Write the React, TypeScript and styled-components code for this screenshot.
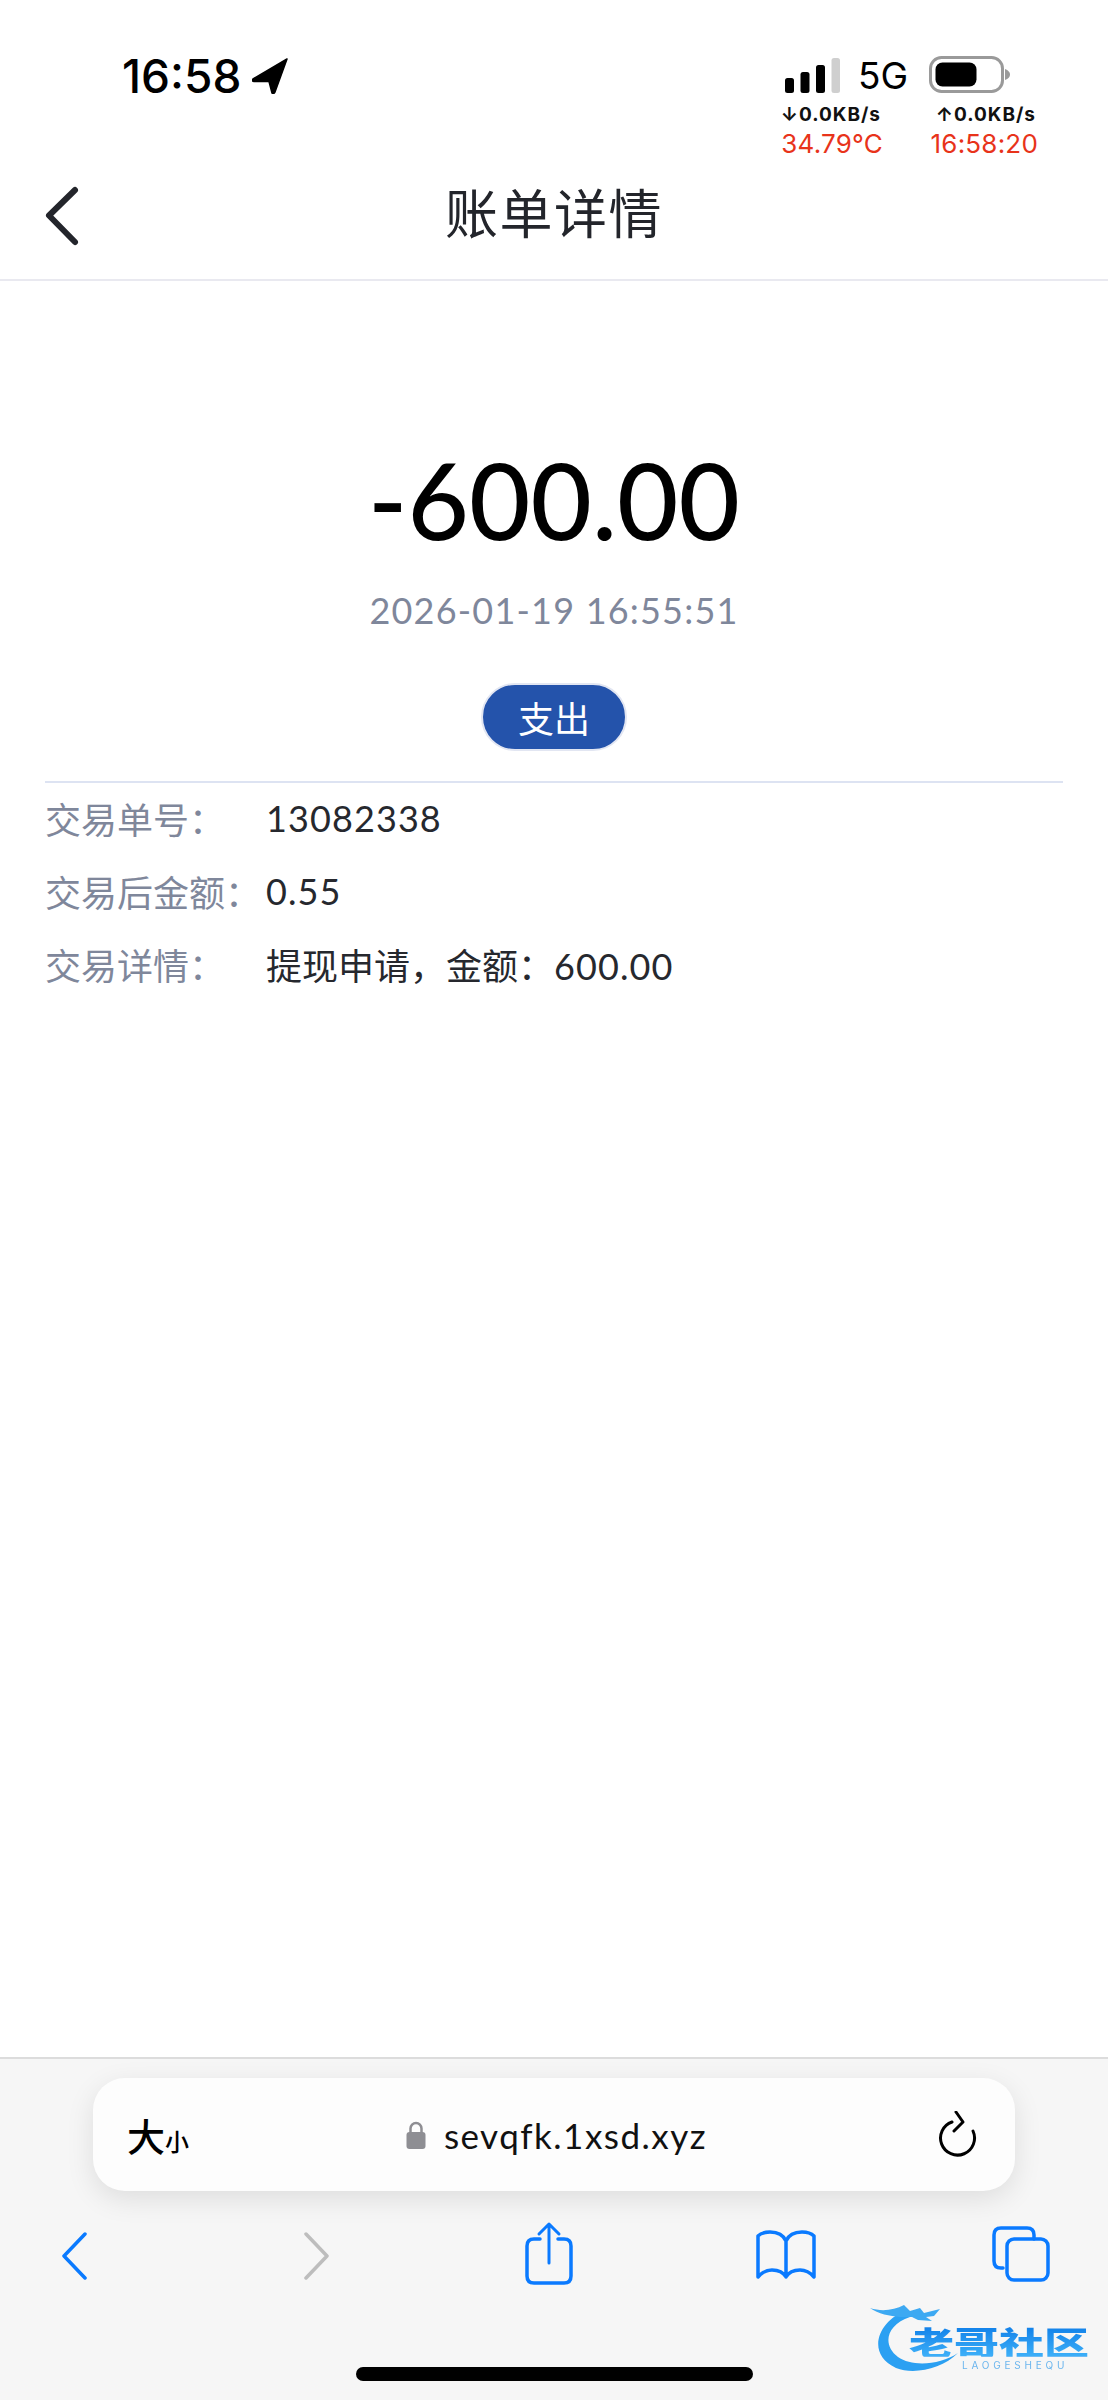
import React from "react";
import styled, { createGlobalStyle } from "styled-components";

const Global = createGlobalStyle`
  html, body { margin: 0; padding: 0; background: #fff; }
  body { font-family: Lato, "Noto Sans CJK SC", sans-serif; }
`;

const Phone = styled.div`
  position: relative;
  width: 1108px;
  height: 2400px;
  display: flex;
  flex-direction: column;
  background: #fff;
  overflow: hidden;
`;

const StatusBar = styled.div`
  height: 165px;
  display: flex;
  justify-content: space-between;
  align-items: flex-start;
  padding: 0 70px 0 122px;
  box-sizing: border-box;
`;

const TimeGroup = styled.div`
  display: flex;
  align-items: center;
  gap: 11px;
  margin-top: 52px;
  height: 48px;
`;

const Clock = styled.span`
  font-family: Inter, sans-serif;
  font-size: 46px;
  font-weight: 500;
  color: #000;
`;

const StatusRight = styled.div`
  display: flex;
  flex-direction: column;
  align-items: flex-end;
  margin-top: 56px;
`;

const SignalRow = styled.div`
  display: flex;
  align-items: center;
  height: 38px;
  width: 249px;
  margin-right: 4px;
`;

const NetLabel = styled.span`
  font-family: Inter, sans-serif;
  font-size: 37px;
  font-weight: 400;
  color: #000;
  margin: 0 21px 0 18px;
`;

const MetricGrid = styled.div`
  display: grid;
  grid-template-columns: 155px 155px;
  margin-top: 9px;
  justify-items: end;
`;

const Speed = styled.span`
  font-family: Inter, sans-serif;
  font-size: 19px;
  font-weight: 700;
  letter-spacing: 1px;
  line-height: 24px;
  color: #111;
  margin-right: 2px;
`;

const Reading = styled.span`
  font-family: Inter, sans-serif;
  font-size: 26px;
  font-weight: 400;
  letter-spacing: 0.2px;
  line-height: 30px;
  color: #e8331a;
  margin-top: 2px;
`;

const NavBar = styled.header`
  height: 116px;
  display: flex;
  align-items: center;
  justify-content: center;
  position: relative;
  border-bottom: 2px solid #e9e9f0;
  box-sizing: border-box;
  padding-bottom: 16px;
`;

const BackButton = styled.div`
  position: absolute;
  left: 43px;
  top: 19px;
  display: flex;
`;

const Title = styled.h1`
  margin: 0;
  font-size: 53px;
  font-weight: 400;
  color: #23252b;
  letter-spacing: 1.500px;
  line-height: 70px;
`;

const Main = styled.main`
  flex: 1;
  display: flex;
  flex-direction: column;
  align-items: center;
  padding: 0 45px;
`;

const Amount = styled.div`
  margin-top: 163px;
  font-size: 106px;
  font-weight: 500;
  line-height: 110px;
  color: #000;
`;

const DateText = styled.div`
  margin-top: 34px;
  font-size: 36px;
  line-height: 44px;
  letter-spacing: 1.200px;
  color: #7f879b;
`;

const Tag = styled.div`
  margin-top: 51px;
  width: 146px;
  height: 68px;
  box-sizing: border-box;
  border: 2px solid #e2e6f2;
  border-radius: 34px;
  background: #2453ab;
  color: #fff;
  font-size: 36px;
  display: flex;
  align-items: center;
  justify-content: center;
`;

const Details = styled.div`
  width: 100%;
  margin-top: 30px;
  border-top: 2px solid #dde3f2;
  box-sizing: border-box;
  display: grid;
  row-gap: 3px;
`;

const DetailRow = styled.div`
  display: flex;
  height: 70px;
  align-items: center;
  font-size: 36px;
`;

const DetailLabel = styled.span`
  width: 221px;
  flex: none;
  color: #7f879b;
`;

const DetailValue = styled.span`
  color: #26282e;
`;

const Digits = styled.span`
  letter-spacing: 1.100px;
`;

const BrowserBar = styled.footer`
  height: 343px;
  background: #f6f6f6;
  border-top: 2px solid #dcdcdc;
  box-sizing: border-box;
  padding-top: 19px;
`;

const UrlBar = styled.div`
  margin-left: 93px;
  width: 922px;
  height: 113px;
  border-radius: 32px;
  background: #fdfdfd;
  box-shadow: 0 8px 28px rgba(0, 0, 0, 0.1);
  display: flex;
  align-items: center;
  justify-content: space-between;
  padding: 0 37px 0 34px;
  box-sizing: border-box;
`;

const SizeMark = styled.span`
  display: flex;
  align-items: baseline;
  font-size: 38px;
  font-weight: 500;
  color: #000;
`;

const SmallMark = styled.span`
  font-size: 24px;
`;

const Address = styled.div`
  display: flex;
  align-items: center;
  gap: 18px;
  font-size: 35px;
  color: #111;
  letter-spacing: 1.500px;
  margin-right: 14px;
`;

const ToolRow = styled.nav`
  display: flex;
  align-items: flex-start;
  padding-left: 61px;
  margin-top: 30px;
`;

const ToolIcon = styled.svg<{ $gap: number; $top: number }>`
  flex: none;
  margin-left: ${(p) => p.$gap}px;
  margin-top: ${(p) => p.$top}px;
  fill: none;
  stroke-linecap: round;
  stroke-linejoin: round;
`;

const HomeIndicator = styled.div`
  width: 397px;
  height: 14px;
  border-radius: 7px;
  background: #000;
  margin: 82px auto 0;
`;

const Watermark = styled.div`
  position: absolute;
  left: 870px;
  top: 2303px;
  width: 222px;
  height: 72px;
  filter: blur(0.6px);
`;

const WatermarkName = styled.span`
  position: absolute;
  left: 39px;
  top: 22px;
  font-family: "Noto Sans CJK SC", sans-serif;
  font-weight: 900;
  font-size: 45px;
  line-height: 44px;
  white-space: nowrap;
  transform: scaleY(0.72);
  transform-origin: top left;
  background: linear-gradient(#0f7ee8, #3eb0f8);
  -webkit-background-clip: text;
  background-clip: text;
  color: transparent;
`;

const WatermarkSub = styled.span`
  position: absolute;
  left: 92px;
  top: 57px;
  font-family: Inter, sans-serif;
  font-size: 10px;
  letter-spacing: 3.800px;
  line-height: 11px;
  color: #6cb6ee;
`;

const BLUE = "#0a7aff";

export default function App() {
  return (
    <Phone>
      <Global />
      <StatusBar>
        <TimeGroup>
          <Clock>16:58</Clock>
          <svg width="36" height="36" viewBox="0 0 36 36">
            <path d="M35 1 L1 21 Q-1 23 2 23.500 L17 23.500 L20 35 Q21 37 23 34 Z" fill="#000" stroke="#000" strokeWidth="1.500" strokeLinejoin="round" />
          </svg>
        </TimeGroup>
        <StatusRight>
          <SignalRow>
            <svg width="55" height="36" viewBox="0 0 55 36">
              <rect x="0" y="21" width="9" height="15" rx="2.500" fill="#000" />
              <rect x="15.500" y="15" width="9" height="21" rx="2.500" fill="#000" />
              <rect x="31" y="8" width="9" height="28" rx="2.500" fill="#000" />
              <rect x="46.500" y="1" width="8.500" height="35" rx="2.500" fill="#cfcfcf" />
            </svg>
            <NetLabel>5G</NetLabel>
            <svg width="82" height="38" viewBox="0 0 82 38">
              <rect x="1.500" y="1.500" width="72" height="34" rx="11" fill="none" stroke="#9a9a9a" strokeWidth="3" />
              <rect x="6.500" y="6.500" width="41" height="24" rx="7" fill="#000" />
              <path d="M76 13 Q81 15 81 18.500 Q81 22 76 24 Z" fill="#9a9a9a" />
            </svg>
          </SignalRow>
          <MetricGrid>
            <Speed>↓0.0KB/s</Speed>
            <Speed>↑0.0KB/s</Speed>
            <Reading>34.79°C</Reading>
            <Reading>16:58:20</Reading>
          </MetricGrid>
        </StatusRight>
      </StatusBar>

      <NavBar>
        <BackButton>
          <svg width="40" height="66" viewBox="0 0 40 66">
            <path d="M32 6 L6 31.500 L32 58" fill="none" stroke="#23252b" strokeWidth="6" strokeLinecap="round" strokeLinejoin="round" />
          </svg>
        </BackButton>
        <Title>账单详情</Title>
      </NavBar>

      <Main>
        <Amount>-600.00</Amount>
        <DateText>2026-01-19 16:55:51</DateText>
        <Tag>支出</Tag>
        <Details>
          <DetailRow>
            <DetailLabel>交易单号：</DetailLabel>
            <DetailValue><Digits>13082338</Digits></DetailValue>
          </DetailRow>
          <DetailRow>
            <DetailLabel>交易后金额：</DetailLabel>
            <DetailValue><Digits>0.55</Digits></DetailValue>
          </DetailRow>
          <DetailRow>
            <DetailLabel>交易详情：</DetailLabel>
            <DetailValue>提现申请，金额：<Digits>600.00</Digits></DetailValue>
          </DetailRow>
        </Details>
      </Main>

      <BrowserBar>
        <UrlBar>
          <SizeMark>
            大<SmallMark>小</SmallMark>
          </SizeMark>
          <Address>
            <svg width="20" height="28" viewBox="0 0 20 28">
              <path d="M4.500 13 V7.500 a5.500 5.500 0 0 1 11 0 V13" fill="none" stroke="#8e8e93" strokeWidth="2.500" />
              <rect x="0.500" y="11" width="19" height="17" rx="3" fill="#8e8e93" />
            </svg>
            sevqfk.1xsd.xyz
          </Address>
          <svg width="40" height="48" viewBox="0 0 40 48">
            <path d="M14 11 A17 17 0 1 0 35 20" fill="none" stroke="#000" strokeWidth="3" strokeLinecap="round" />
            <path d="M18 1 L25 11 L16 20" fill="none" stroke="#000" strokeWidth="3" strokeLinecap="round" strokeLinejoin="round" />
          </svg>
        </UrlBar>
        <ToolRow>
          <ToolIcon $gap={0} $top={11} width="27" height="48" viewBox="0 0 27 48">
            <path d="M24 2 L3 24 L24 46" stroke={BLUE} strokeWidth="3.500" />
          </ToolIcon>
          <ToolIcon $gap={215} $top={11} width="27" height="48" viewBox="0 0 27 48">
            <path d="M3 2 L24 24 L3 46" stroke="#bdbdbd" strokeWidth="3.500" />
          </ToolIcon>
          <ToolIcon $gap={195} $top={0} width="48" height="64" viewBox="0 0 48 64">
            <path d="M15 18 H9 Q2 18 2 25 V55 Q2 62 9 62 H39 Q46 62 46 55 V25 Q46 18 39 18 H33" stroke={BLUE} strokeWidth="3.500" />
            <path d="M24 42 V3 M14 13 L24 3 L34 13" stroke={BLUE} strokeWidth="3" />
          </ToolIcon>
          <ToolIcon $gap={183} $top={9} width="60" height="50" viewBox="0 0 60 50">
            <path d="M30 11 Q26 2 14 2 Q6 2 2 6 V47 Q8 40 16 40 Q26 40 30 47 Q34 40 44 40 Q52 40 58 47 V6 Q54 2 46 2 Q34 2 30 11 Z M30 11 V47" stroke={BLUE} strokeWidth="3.500" />
          </ToolIcon>
          <ToolIcon $gap={176} $top={5} width="58" height="56" viewBox="0 0 58 56">
            <path d="M11 42 H9 Q2 42 2 35 V9 Q2 2 9 2 H35 Q42 2 42 9 V13" stroke={BLUE} strokeWidth="3.500" />
            <rect x="15" y="13" width="41" height="41" rx="7" stroke={BLUE} strokeWidth="3.500" />
          </ToolIcon>
        </ToolRow>
        <HomeIndicator />
      </BrowserBar>

      <Watermark>
        <svg width="95" height="72" viewBox="0 0 95 72">
          <path d="M36 8 C10 16 -6 50 26 65 C44 72 72 66 88 50 C70 62 42 64 28 54 C12 42 16 22 40 14 Z" fill="#2ba0f2" />
          <path d="M0 5 C12 9 24 7 34 2 L40 8 L50 5 L54 10 L70 6 L64 13 L56 14 L62 18 L48 17 L42 14 L30 14 C20 13 8 11 0 5 Z" fill="#3da9f2" />
        </svg>
        <WatermarkName>老哥社区</WatermarkName>
        <WatermarkSub>LAOGESHEQU</WatermarkSub>
      </Watermark>
    </Phone>
  );
}
